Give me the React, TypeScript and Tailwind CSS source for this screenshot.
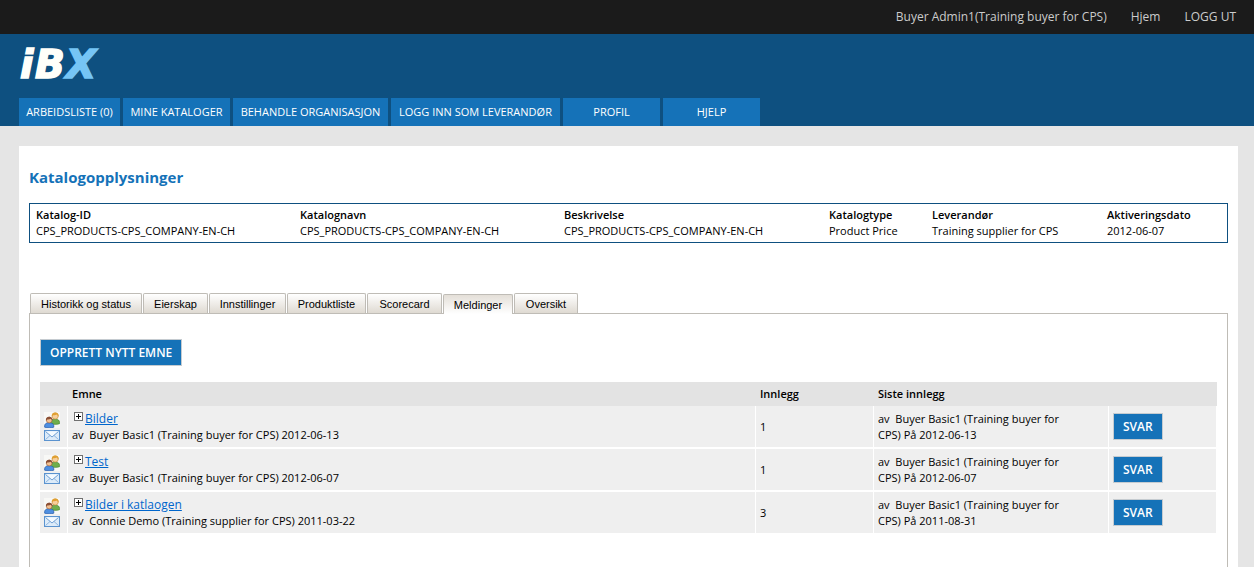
import { clsx } from 'clsx'

const navItems = [
    { label: 'ARBEIDSLISTE (0)', width: 'w-[101px]' },
    { label: 'MINE KATALOGER', width: 'w-[107px]' },
    { label: 'BEHANDLE ORGANISASJON', width: 'w-[155px]' },
    { label: 'LOGG INN SOM LEVERANDØR', width: 'w-[169px]' },
    { label: 'PROFIL', width: 'w-[97px]' },
    { label: 'HJELP', width: 'w-[97px]' },
]

const catalogInfo = [
    { label: 'Katalog-ID', value: 'CPS_PRODUCTS-CPS_COMPANY-EN-CH', width: 'w-[264px]' },
    { label: 'Katalognavn', value: 'CPS_PRODUCTS-CPS_COMPANY-EN-CH', width: 'w-[264px]' },
    { label: 'Beskrivelse', value: 'CPS_PRODUCTS-CPS_COMPANY-EN-CH', width: '' },
    { label: 'Katalogtype', value: 'Product Price', width: 'w-[103px]' },
    { label: 'Leverandør', value: 'Training supplier for CPS', width: 'w-[175px]' },
    { label: 'Aktiveringsdato', value: '2012-06-07', width: 'w-[126px]' },
]

const tabs = [
    { label: 'Historikk og status', width: 'w-28' },
    { label: 'Eierskap', width: 'w-[65px]' },
    { label: 'Innstillinger', width: 'w-[77px]' },
    { label: 'Produktliste', width: 'w-[79px]' },
    { label: 'Scorecard', width: 'w-[75px]' },
    { label: 'Meldinger', width: 'w-[70px]' },
    { label: 'Oversikt', width: 'w-16' },
]

const topics = [
    {
        title: 'Bilder',
        author: 'Buyer Basic1 (Training buyer for CPS)',
        date: '2012-06-13',
        posts: 1,
        lastAuthor: 'Buyer Basic1 (Training buyer for CPS)',
        lastDate: '2012-06-13',
    },
    {
        title: 'Test',
        author: 'Buyer Basic1 (Training buyer for CPS)',
        date: '2012-06-07',
        posts: 1,
        lastAuthor: 'Buyer Basic1 (Training buyer for CPS)',
        lastDate: '2012-06-07',
    },
    {
        title: 'Bilder i katlaogen',
        author: 'Connie Demo (Training supplier for CPS)',
        date: '2011-03-22',
        posts: 3,
        lastAuthor: 'Buyer Basic1 (Training buyer for CPS)',
        lastDate: '2011-08-31',
    },
]

export default function App() {
    return (
        <div className="flex min-h-screen flex-col bg-[#e5e5e5] font-['Open_Sans',sans-serif] text-[11px] leading-4 text-black">
            <TopBar />
            <Header />
            <main className="mt-5 mr-4 ml-[19px] flex flex-1 flex-col bg-white px-2.5 pt-[19px]">
                <h1 className="text-[15px] leading-6 font-bold text-[#1572b8]">Katalogopplysninger</h1>
                <CatalogInfo />
                <Tabs />
                <section className="flex-1 border border-b-0 border-[#bfbcb6] px-2.5 pt-[25px] pb-8">
                    <ActionButton>OPPRETT NYTT EMNE</ActionButton>
                    <TopicTable />
                </section>
            </main>
        </div>
    )
}

const TopBar = () => (
    <div className="flex h-[34px] items-center justify-end gap-6 bg-[#1b1b1b] pr-[18px] text-[12px] text-[#cccccc]">
        <span>Buyer Admin1(Training buyer for CPS)</span>
        <a href="#hjem">Hjem</a>
        <a href="#logg-ut">LOGG UT</a>
    </div>
)

const Header = () => (
    <header className="bg-[#0e5080] pt-1.5 pl-[19px]">
        <a href="#ibx" className="block w-fit">
            <Logo />
        </a>
        <nav className="mt-1 flex gap-[3px]">
            {navItems.map((item) => (
                <a
                    key={item.label}
                    href="#nav"
                    className={clsx('flex h-7 items-center justify-center bg-[#1572b8] whitespace-nowrap text-white', item.width)}
                >
                    {item.label}
                </a>
            ))}
        </nav>
    </header>
)

const CatalogInfo = () => (
    <div className="mt-3.5 border border-[#0e5080] py-[3px]">
        <table className="w-full table-fixed text-left">
            <thead>
                <tr>
                    {catalogInfo.map((col) => (
                        <th key={col.label} className={clsx('px-1.5 py-0 font-semibold', col.width)}>
                            {col.label}
                        </th>
                    ))}
                </tr>
            </thead>
            <tbody>
                <tr>
                    {catalogInfo.map((col) => (
                        <td key={col.label} className="px-1.5 py-0 whitespace-nowrap">
                            {col.value}
                        </td>
                    ))}
                </tr>
            </tbody>
        </table>
    </div>
)

const Tabs = () => (
    <div role="tablist" className="mt-[50px] ml-px flex items-end gap-px font-['Liberation_Sans',Arial,sans-serif]">
        {tabs.map((tab) => {
            const active = tab.label === 'Meldinger'
            return (
                <button
                    key={tab.label}
                    type="button"
                    role="tab"
                    aria-selected={active}
                    className={clsx(
                        'h-5 rounded-t-[2px] border border-b-0 border-[#bfbcb6] whitespace-nowrap',
                        tab.width,
                        active
                            ? 'relative -mb-px bg-linear-to-b from-[#e4dfd8] to-white pt-px'
                            : 'bg-linear-to-b from-white to-[#dfdad2]',
                    )}
                >
                    {tab.label}
                </button>
            )
        })}
    </div>
)

const ActionButton = ({ children }: { children: React.ReactNode }) => (
    <button
        type="button"
        className="block h-[27px] border border-[#c5cbd0] bg-[#1572b8] px-[9px] text-[12px] font-semibold whitespace-nowrap text-white"
    >
        {children}
    </button>
)

const TopicTable = () => (
    <table className="mt-4 w-full table-fixed border-separate border-spacing-0 text-left">
        <thead>
            <tr className="h-6 bg-[#e3e3e3]">
                <th className="w-7" aria-label="Type" />
                <th className="px-1 font-semibold">Emne</th>
                <th className="w-[118px] px-1 font-semibold">Innlegg</th>
                <th className="w-[235px] px-1 font-semibold">Siste innlegg</th>
                <th className="w-[108px]" aria-label="Svar" />
            </tr>
        </thead>
        <tbody>
            {topics.map((topic) => (
                <tr
                    key={topic.title}
                    className="h-[43px] bg-[#efefef] *:border-r *:border-b-2 *:border-white *:px-1 *:py-0"
                >
                    <td>
                        <PeopleIcon />
                        <MailIcon />
                    </td>
                    <td>
                        <div className="flex gap-0.5 pl-0.5">
                            <button type="button" aria-label="Utvid" className="mt-px h-[9px]">
                                <PlusBox />
                            </button>
                            <a href="#emne" className="text-[12px] text-[#0066cc] underline">
                                {topic.title}
                            </a>
                        </div>
                        <div>{`av\u00a0 ${topic.author} ${topic.date}`}</div>
                    </td>
                    <td>{topic.posts}</td>
                    <td>
                        <p className="pr-8">{`av\u00a0 ${topic.lastAuthor} På ${topic.lastDate}`}</p>
                    </td>
                    <td>
                        <ActionButton>SVAR</ActionButton>
                    </td>
                </tr>
            ))}
        </tbody>
    </table>
)

const Logo = () => (
    <svg width="90" height="54" viewBox="0 0 90 54" className="block overflow-visible" role="img" aria-label="iBX">
        <g fontFamily="DejaVu Sans" fontSize="39" fontWeight="700" fontStyle="italic" strokeWidth="1.6">
            <text x="1" y="38" fill="#fffffa" stroke="#fffffa">i</text>
            <text x="16" y="38" fill="#fffffa" stroke="#fffffa">B</text>
            <text x="47" y="38" fill="#76c5f5" stroke="#76c5f5">X</text>
        </g>
    </svg>
)

const PeopleIcon = () => (
    <svg width="16" height="16" viewBox="0 0 16 16" className="block" aria-hidden="true">
        <rect width="16" height="16" fill="#f8f8f6" />
        {/* back person */}
        <path d="M6.5 11.5V9.6C7 8 8.4 7.2 10.5 7.2h1.2c2.4 0 3.8 1.2 3.8 3.2v1.3c-2.5.9-6.5.9-9-.2z" fill="#6fae4c" stroke="#43852c" strokeWidth=".7" />
        <circle cx="11.2" cy="4" r="3.1" fill="#f6cf9c" stroke="#c88a2c" strokeWidth=".6" />
        <path d="M7.8 4.5C7.5 1.8 9 .4 11.2.4s3.8 1.4 3.4 4.2c-.9-.5-1.3-1.3-1.5-2-1.3.7-3.6.9-4.300.7-.1.5-.4.9-1 1.2z" fill="#e0a032" />
        {/* front person */}
        <path d="M.6 15.2v-1.6c.4-2 1.8-2.9 3.9-2.9h1.2c2.3 0 3.9 1.1 4.1 3.1v1.4c-2.6.8-6.6.8-9.2 0z" fill="#4f8fe0" stroke="#2459a8" strokeWidth=".7" />
        <circle cx="5.2" cy="8" r="2.9" fill="#f3c091" stroke="#9a5a34" strokeWidth=".6" />
        <path d="M1.9 8.5C1.7 5.9 3.1 4.7 5.2 4.7s3.6 1.3 3.3 3.9c-.8-.5-1.2-1.2-1.4-1.8-1.2.6-3.3.8-4 .6-.1.5-.5.9-1.2 1.1z" fill="#8b4f36" />
    </svg>
)

const MailIcon = () => (
    <svg width="16" height="11" viewBox="0 0 16 11" className="mt-0.5 block" aria-hidden="true">
        <rect x=".5" y=".5" width="15" height="10" fill="#dcebf9" stroke="#5b93cf" />
        <path d="M1.5 9.5l4.5-4M14.5 9.5l-4.5-4" stroke="#8fb6e0" fill="none" />
        <path d="M1.5 1.5L8 7l6.5-5.5" stroke="#6f9fd4" fill="#f4faff" />
    </svg>
)

const PlusBox = () => (
    <svg width="9" height="9" viewBox="0 0 9 9" className="block" aria-hidden="true">
        <rect x=".5" y=".5" width="8" height="8" fill="#fff" stroke="#707070" />
        <path d="M2 4.5h5M4.5 2v5" stroke="#000" />
    </svg>
)
